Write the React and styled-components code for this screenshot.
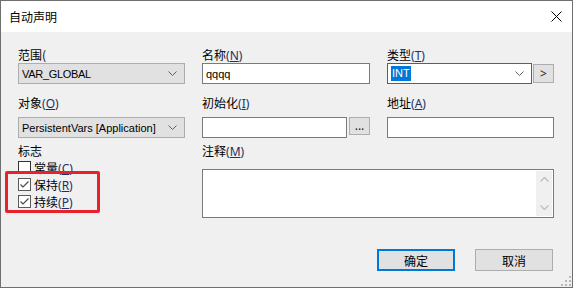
import React from 'react'
import styled, { createGlobalStyle } from 'styled-components'

const GlobalStyle = createGlobalStyle`
  body {
    margin: 0;
    background: #ffffff;
    font-family: "Noto Sans", "Noto Sans CJK SC", sans-serif;
    font-size: 12px;
    color: #000;
  }
`

const Window = styled.div`
  width: 573px;
  height: 288px;
  box-sizing: border-box;
  border: 1px solid #6f6f6f;
  display: flex;
  flex-direction: column;
  background: #f0f0f0;
`

const TitleBar = styled.div`
  height: 31px;
  background: #ffffff;
  display: flex;
  align-items: center;
  justify-content: space-between;
  padding: 0 10px 0 8px;
  flex-shrink: 0;
`

const Title = styled.span`
  font-family: "Noto Sans CJK SC", sans-serif;
  font-size: 12px;
  line-height: 16px;
`

const Body = styled.div`
  position: relative;
  flex: 1;
  padding: 15px 19px 0 17px;
`

const FormGrid = styled.div`
  display: grid;
  grid-template-columns: 167px 168px 167px;
  grid-template-rows: 48px 48px auto;
  column-gap: 17px;
`

const Field = styled.div`
  display: flex;
  flex-direction: column;
  grid-column: ${p => p.$span || 'auto'};
`

const Label = styled.div`
  font-family: "Noto Sans CJK SC", sans-serif;
  font-size: 12px;
  line-height: 16px;
  height: 16px;
  margin-bottom: ${p => p.$gap || 0}px;
  white-space: nowrap;
`

const Key = styled.span`
  font-family: "Noto Sans", sans-serif;
  color: #1d2f66;
  u { text-underline-offset: 1px; }
`

const Row = styled.div`
  display: flex;
  gap: ${p => p.$gap || 2}px;
  align-items: flex-start;
`

const Combo = styled.div`
  box-sizing: border-box;
  width: ${p => p.$width || 167}px;
  height: 21px;
  display: flex;
  align-items: center;
  justify-content: space-between;
  gap: 4px;
  padding: 0 7px 0 3px;
  background: ${p => (p.$focused ? '#ffffff' : '#e1e1e1')};
  border: 1px solid ${p => (p.$focused ? '#0078d7' : '#adadad')};
  font-family: "Liberation Sans", Arial, sans-serif;
  font-size: 11px;
  white-space: nowrap;
  svg { flex-shrink: 0; }
`

const ComboText = styled.span`
  overflow: hidden;
  letter-spacing: ${p => p.$tight ? '-0.3px' : '0'};
`

const Selected = styled.span`
  background: #0078d7;
  color: #ffffff;
  line-height: 15px;
  padding: 0 1px;
`

const Input = styled.div`
  box-sizing: border-box;
  width: ${p => p.$width || 168}px;
  height: 21px;
  background: #ffffff;
  border: 1px solid #7a7a7a;
  padding: 0 3px;
  display: flex;
  align-items: center;
  font-family: "Liberation Sans", Arial, sans-serif;
  font-size: 11px;
`

const SmallButton = styled.div`
  box-sizing: border-box;
  width: 21px;
  height: ${p => p.$height || 19}px;
  margin-top: ${p => p.$top || 0}px;
  background: #e1e1e1;
  border: 1px solid #adadad;
  display: flex;
  align-items: center;
  justify-content: center;
  font-size: 12px;
  line-height: 1;
  color: #1a1a1a;
`

const Chevron = () => (
  <svg width="9" height="5" viewBox="0 0 9 5">
    <path d="M0.5 0.5 L4.5 4.5 L8.5 0.5" fill="none" stroke="#606060" strokeWidth="1" />
  </svg>
)

const CheckList = styled.div`
  position: relative;
  display: flex;
  flex-direction: column;
`

const CheckRow = styled.div`
  height: 17px;
  display: flex;
  align-items: center;
  gap: 3px;
  font-family: "Noto Sans CJK SC", sans-serif;
`

const Box = styled.span`
  box-sizing: border-box;
  width: 13px;
  height: 13px;
  border: 1px solid ${p => (p.$checked ? '#5a5a5a' : '#333333')};
  background: #ffffff;
  display: flex;
  align-items: center;
  justify-content: center;
`

const Highlight = styled.div`
  position: absolute;
  left: -13px;
  top: 12px;
  width: 95px;
  height: 42px;
  box-sizing: border-box;
  border: 3px solid #e8212b;
  border-radius: 2px;
`

const TextArea = styled.div`
  box-sizing: border-box;
  height: 49px;
  background: #ffffff;
  border: 1px solid #7a7a7a;
  display: flex;
  justify-content: flex-end;
  padding: 1px;
`

const ScrollBar = styled.div`
  width: 16px;
  background: #f0f0f0;
  display: flex;
  flex-direction: column;
  justify-content: space-between;
  align-items: center;
  padding: 6px 0;
`

const ButtonRow = styled.div`
  display: flex;
  justify-content: flex-end;
  gap: 20px;
  margin-top: 31px;
`

const Button = styled.div`
  box-sizing: border-box;
  width: 78px;
  height: 22px;
  background: #e1e1e1;
  border: ${p => (p.$primary ? '2px solid #0078d7' : '1px solid #adadad')};
  display: flex;
  align-items: center;
  justify-content: center;
  font-family: "Noto Sans CJK SC", sans-serif;
  font-size: 12px;
`

const Grip = styled.svg`
  position: absolute;
  right: 1px;
  bottom: 1px;
`

const Check = () => (
  <svg width="11" height="11" viewBox="0 0 11 11">
    <path d="M1.5 5.5 L4 8 L9.5 2.5" fill="none" stroke="#4a4a4a" strokeWidth="1.2" />
  </svg>
)

function Mnemonic({ k }) {
  return (
    <Key>
      (<u>{k}</u>)
    </Key>
  )
}

export default function App() {
  return (
    <>
      <GlobalStyle />
      <Window>
        <TitleBar>
          <Title>自动声明</Title>
          <svg width="11" height="11" viewBox="0 0 11 11">
            <path d="M0.5 0.5 L10.5 10.5 M10.5 0.5 L0.5 10.5" stroke="#000" strokeWidth="1" />
          </svg>
        </TitleBar>
        <Body>
          <FormGrid>
            <Field>
              <Label>范围(</Label>
              <Combo>
                <ComboText $tight>VAR_GLOBAL</ComboText>
                <Chevron />
              </Combo>
            </Field>
            <Field>
              <Label>
                名称<Mnemonic k="N" />
              </Label>
              <Input>qqqq</Input>
            </Field>
            <Field>
              <Label>
                类型<Mnemonic k="T" />
              </Label>
              <Row $gap={1}>
                <Combo $width={145} $focused>
                  <Selected>INT</Selected>
                  <Chevron />
                </Combo>
                <SmallButton $top={1}>&gt;</SmallButton>
              </Row>
            </Field>

            <Field>
              <Label $gap={6}>
                对象<Mnemonic k="O" />
              </Label>
              <Combo>
                <ComboText>PersistentVars [Application]</ComboText>
                <Chevron />
              </Combo>
            </Field>
            <Field>
              <Label $gap={6}>
                初始化<Mnemonic k="I" />
              </Label>
              <Row $gap={2}>
                <Input $width={145} />
                <SmallButton $height={18}>...</SmallButton>
              </Row>
            </Field>
            <Field>
              <Label $gap={6}>
                地址<Mnemonic k="A" />
              </Label>
              <Input $width={167} />
            </Field>

            <Field>
              <Label>标志</Label>
              <CheckList>
                <CheckRow>
                  <Box />
                  <span>
                    常量<Mnemonic k="C" />
                  </span>
                </CheckRow>
                <CheckRow>
                  <Box $checked>
                    <Check />
                  </Box>
                  <span>
                    保持<Mnemonic k="R" />
                  </span>
                </CheckRow>
                <CheckRow>
                  <Box $checked>
                    <Check />
                  </Box>
                  <span>
                    持续<Mnemonic k="P" />
                  </span>
                </CheckRow>
                <Highlight />
              </CheckList>
            </Field>
            <Field $span="2 / 4">
              <Label $gap={10}>
                注释<Mnemonic k="M" />
              </Label>
              <TextArea>
                <ScrollBar>
                  <svg width="9" height="5" viewBox="0 0 9 5">
                    <path d="M0.5 4.5 L4.5 0.5 L8.5 4.5" fill="none" stroke="#c2c2c2" strokeWidth="1.5" />
                  </svg>
                  <svg width="9" height="5" viewBox="0 0 9 5">
                    <path d="M0.5 0.5 L4.5 4.5 L8.5 0.5" fill="none" stroke="#c2c2c2" strokeWidth="1.5" />
                  </svg>
                </ScrollBar>
              </TextArea>
            </Field>
          </FormGrid>

          <ButtonRow>
            <Button $primary>确定</Button>
            <Button>取消</Button>
          </ButtonRow>

          <Grip width="10" height="10" viewBox="0 0 10 10">
            <rect x="8" y="0" width="2" height="2" fill="#b8b8b8" />
            <rect x="4" y="4" width="2" height="2" fill="#b8b8b8" />
            <rect x="8" y="4" width="2" height="2" fill="#b8b8b8" />
            <rect x="0" y="8" width="2" height="2" fill="#b8b8b8" />
            <rect x="4" y="8" width="2" height="2" fill="#b8b8b8" />
            <rect x="8" y="8" width="2" height="2" fill="#b8b8b8" />
          </Grip>
        </Body>
      </Window>
    </>
  )
}
